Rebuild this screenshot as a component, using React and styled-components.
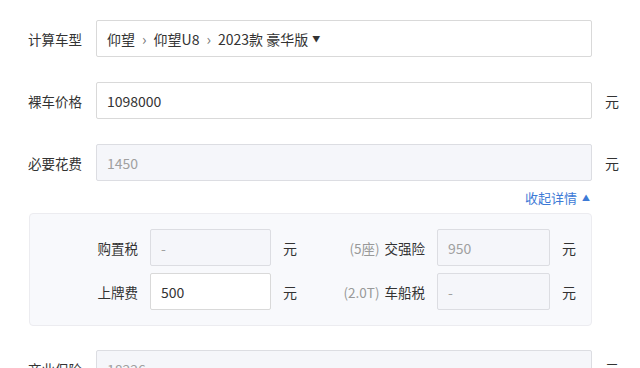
import React from "react";
import styled, { createGlobalStyle } from "styled-components";

const GlobalStyle = createGlobalStyle`
  html, body {
    margin: 0;
    padding: 0;
    background: #fff;
  }
  body {
    font-family: "Noto Sans CJK SC", "Noto Sans", sans-serif;
    color: #333;
    font-size: 14px;
  }
`;

const Page = styled.div`
  padding: 20px 0 0 28px;
  width: 620px;
  overflow: hidden;
  height: 348px;
`;

const Row = styled.div`
  display: flex;
  align-items: center;
  gap: 13px;
  margin-bottom: ${(p) => p.$mb || 0}px;
`;

const Label = styled.div`
  width: 55px;
  font-size: 13.5px;
  color: #333;
  white-space: nowrap;
`;

const Field = styled.div`
  box-sizing: border-box;
  width: ${(p) => p.$w || 496}px;
  height: 37px;
  border: 1px solid ${(p) => (p.$disabled ? "#dcdde2" : "#d9d9d9")};
  background: ${(p) => (p.$disabled ? "#f5f6fa" : "#fff")};
  border-radius: 2px;
  display: flex;
  align-items: center;
  padding-left: 10px;
  font-size: 14px;
  color: ${(p) => (p.$disabled ? "#a0a0a0" : "#333")};
`;

const Sep = styled.span`
  color: #777;
  margin: 0 7px;
  font-size: 15px;
`;

const Caret = styled.span`
  font-size: 8px;
  margin-left: ${(p) => p.$ml ?? 4}px;
  color: ${(p) => p.$color || "#333"};
`;

const Unit = styled.span`
  font-size: 14px;
  color: #333;
`;

const ToggleLine = styled.div`
  width: 564px;
  display: flex;
  justify-content: flex-end;
  margin: 8px 0 8px;
  height: 16px;
  align-items: center;
`;

const Toggle = styled.span`
  color: #3d7ad6;
  font-size: 13px;
  display: flex;
  align-items: center;
  margin-right: 2px;
`;

const Panel = styled.div`
  box-sizing: border-box;
  margin-left: 1px;
  width: 563px;
  background: #f8f9fc;
  border: 1px solid #ececf0;
  border-radius: 4px;
  padding: 15px 0;
  display: grid;
  grid-template-columns: 108px 121px 14px 116px 113px 14px;
  column-gap: 12px;
  row-gap: 7px;
  align-items: center;
  margin-bottom: 24px;
`;

const SubLabel = styled.div`
  text-align: right;
  font-size: 13.5px;
  color: #333;
  white-space: nowrap;
`;

const Note = styled.span`
  color: #999;
  margin-right: 5px;
`;

export default function App() {
  return (
    <>
      <GlobalStyle />
      <Page>
        <Row $mb={25}>
          <Label>计算车型</Label>
          <Field>
            仰望<Sep>›</Sep>仰望U8<Sep>›</Sep>2023款 豪华版<Caret>▼</Caret>
          </Field>
        </Row>
        <Row $mb={25}>
          <Label>裸车价格</Label>
          <Field>1098000</Field>
          <Unit>元</Unit>
        </Row>
        <Row>
          <Label>必要花费</Label>
          <Field $disabled>1450</Field>
          <Unit>元</Unit>
        </Row>
        <ToggleLine>
          <Toggle>
            收起详情<Caret $ml={5} $color="#3d7ad6">▲</Caret>
          </Toggle>
        </ToggleLine>
        <Panel>
          <SubLabel>购置税</SubLabel>
          <Field $w={121} $disabled>-</Field>
          <Unit>元</Unit>
          <SubLabel>
            <Note>(5座)</Note>交强险
          </SubLabel>
          <Field $w={113} $disabled>950</Field>
          <Unit>元</Unit>
          <SubLabel>上牌费</SubLabel>
          <Field $w={121}>500</Field>
          <Unit>元</Unit>
          <SubLabel>
            <Note>(2.0T)</Note>车船税
          </SubLabel>
          <Field $w={113} $disabled>-</Field>
          <Unit>元</Unit>
        </Panel>
        <Row>
          <Label>商业保险</Label>
          <Field $disabled>18226</Field>
          <Unit>元</Unit>
        </Row>
      </Page>
    </>
  );
}
